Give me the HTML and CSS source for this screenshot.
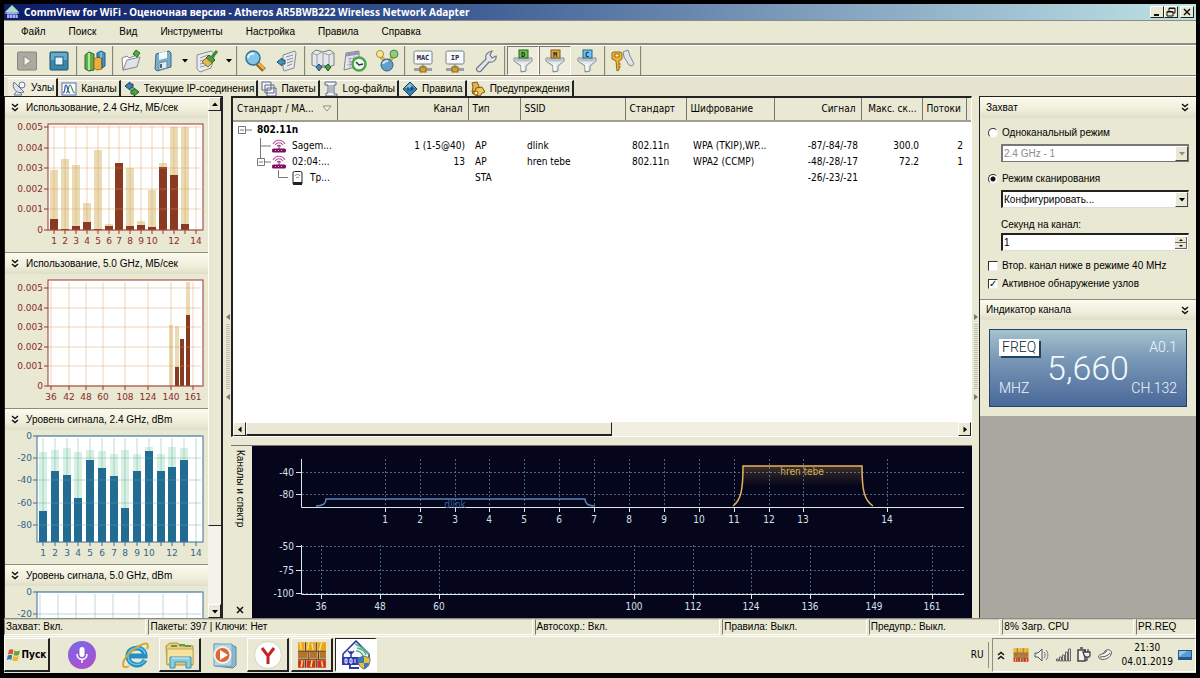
FILE: index.html
```html
<!DOCTYPE html>
<html lang="ru">
<head>
    <meta charset="UTF-8">
    <meta name="viewport" content="width=device-width, initial-scale=1.0">
    <title>CommView for WiFi</title>
    <link rel="stylesheet" href="styles.css">
</head>
<body>
    <svg class="defs" aria-hidden="true">
        <symbol id="chevrons" viewBox="0 0 8 9"><path d="M1 1l3 2.500 3-2.500M1 5l3 2.500 3-2.500" fill="none" stroke="#111" stroke-width="1.500"/></symbol>
        <symbol id="down" viewBox="0 0 8 5"><path d="M1 1h6L4 4.500z" fill="currentColor"/></symbol>
        <symbol id="router" viewBox="0 0 14 14">
            <path d="M1 5C4 0 10 0 13 5M3 6c2-3 6-3 8 0M5 7.500c1-1.500 3-1.500 4 0" fill="none" stroke="#b0559a" stroke-width="1.100"/>
            <path d="M7 6v4" stroke="#8a1c6c"/>
            <rect y="9.500" width="14" height="4" rx="1.500" fill="#7b1260"/>
            <path d="M3 11.500h1M6 11.500h1M9 11.500h1" stroke="#e7b3d8"/>
        </symbol>
        <symbol id="wall" viewBox="0 0 28 26">
            <path d="M1 1h26v24H1z" fill="#e9d9a0"/>
            <path d="M1 1h6v8H1zM9 1h8v8H9zM19 1h8v8h-8z" fill="#e8a322"/>
            <path d="M1 10h9v6H1zM12 10h7v6h-7zM21 10h6v6h-6z" fill="#b3752a"/>
            <path d="M1 18h6v7H1zM9 18h8v7H9zM19 18h8v7h-8z" fill="#c9342a"/>
            <path d="M3 1l1 7M11 1l-1 7M14 2l1 6M23 1l-2 8M5 18l-1 6M14 18l-1 6M23 19l1 5" stroke="#fbe05a" stroke-width="1.500"/>
            <path d="M1 9.500h26M1 17h26M8 1v8M18 1v8M11 10v7M20 10v7M8 17v8M18 17v8" stroke="#5d3524"/>
        </symbol>
        <symbol id="funnel" viewBox="0 0 24 24">
            <path d="M3 9h18v3l-6 5v5l-5 1v-6l-7-5z" fill="#e6ebef" stroke="#7b858d"/>
            <path d="M3 9.500h18l-3 3H6z" fill="#b4bfc8"/>
            <path d="M11.500 15v6" stroke="#fff" stroke-width="2"/>
        </symbol>
        <symbol id="netbox" viewBox="0 0 24 24">
            <rect x="3" y="2" width="18" height="13" rx="1.500" fill="#f8fafc" stroke="#77808c"/>
            <path d="M12 15v4M3 20.500h18" stroke="#98a0a8" stroke-width="3"/>
            <rect x="9" y="18" width="6" height="5" fill="#d7a02a" stroke="#8f6612"/>
        </symbol>
    </svg>

    <header class="title-bar">
        <svg class="app-icon" viewBox="0 0 14 14"><path d="M7 0l7 7H0z" fill="#a9dfc0"/><path d="M2 7h10v6H2z" fill="#5b6bd0"/><path d="M0 8h14M3 10v3M6 10v3M9 10v3M12 10v3" stroke="#e3e6ff" stroke-width="1.200"/></svg>
        <h1>CommView for WiFi - Оценочная версия - Atheros AR5BWB222 Wireless Network Adapter</h1>
        <div class="window-buttons">
            <button aria-label="Свернуть"><svg viewBox="0 0 10 10"><path d="M2 8h5" stroke="#111" stroke-width="2"/></svg></button>
            <button aria-label="Восстановить"><svg viewBox="0 0 10 10"><path d="M3 4V1h6v5H7M1 4.500h6V9H1zM3 1.500h6M1 5h6" fill="none" stroke="#111"/></svg></button>
            <button aria-label="Закрыть" class="close"><svg viewBox="0 0 10 10"><path d="M2 2l6 6M8 2L2 8" stroke="#111" stroke-width="1.500"/></svg></button>
        </div>
    </header>

    <nav class="menu-bar">
        <a href="#">Файл</a>
        <a href="#">Поиск</a>
        <a href="#">Вид</a>
        <a href="#">Инструменты</a>
        <a href="#">Настройка</a>
        <a href="#">Правила</a>
        <a href="#">Справка</a>
    </nav>

    <div class="toolbar">
        <div class="group">
            <button aria-label="Старт"><svg viewBox="0 0 24 24"><rect x="2.500" y="3" width="19" height="18" rx="1" fill="#aaaaa0" stroke="#85857c"/><path d="M9 7l7 5-7 5z" fill="#f2f2e8" stroke="#8b8b82"/></svg></button>
            <button aria-label="Стоп"><svg viewBox="0 0 24 24"><rect x="3" y="3" width="18" height="18" rx="1" fill="#3a86ad" stroke="#1c506e"/><path d="M4 4h16v7H4z" fill="#66abc9"/><rect x="8" y="8" width="8" height="8" fill="#e5f5fb" stroke="#205a78"/></svg></button>
        </div>
        <div class="group">
            <button aria-label="Книги"><svg viewBox="0 0 24 24"><path d="M2 6l4-3 5 2v16l-5 1-4-2z" fill="#5fae4b" stroke="#2d6b2a"/><path d="M6 4v17" stroke="#b6e4a0" stroke-width="2"/><path d="M11 10l4-2 4 1v11l-5 1-3-2z" fill="#efae3c" stroke="#a86b16"/><path d="M14 4l4-2 4 2v13l-3 2V9l-5-1z" fill="#4b93bd" stroke="#25587c"/><path d="M18 3v6" stroke="#b4dcf0"/></svg></button>
        </div>
        <div class="group">
            <button aria-label="Открыть"><svg viewBox="0 0 24 24"><path d="M4 21L3 9l5-2 2 2 8-3v11z" fill="#fff" stroke="#81868e"/><path d="M4 21l4-10 13-3-3 10z" fill="#dfe2e8" stroke="#858b94"/><path d="M17 1l4 3-3 4-4-3z" fill="#54a845" stroke="#256b26"/></svg></button>
            <button aria-label="Сохранить"><svg viewBox="0 0 24 24"><path d="M5 5l13-3 2 2v14L6 22l-2-2z" fill="#79aecd" stroke="#3a6986"/><path d="M8 4l8-2v7l-8 2z" fill="#f4f8fb"/><path d="M8 14l8-2v7l-8 2z" fill="#e4e8ec" stroke="#6a8798"/><path d="M10 15v4" stroke="#3a6986" stroke-width="2"/></svg></button>
            <button class="drop" aria-label="Варианты сохранения"><svg viewBox="0 0 8 5"><use href="#down"/></svg></button>
            <button aria-label="Очистить"><svg viewBox="0 0 24 24"><path d="M2 6l14-4 4 3-4 14-11 4-3-3z" fill="#e9ebee" stroke="#888e95"/><path d="M5 9l8-3M5 12l7-2M5 15l5-1M5 18l8-2" stroke="#8d949c"/><path d="M22 2l-5 6" stroke="#3c8a33" stroke-width="3"/><path d="M14 6l6 5-3 3-6-5z" fill="#4f9e41" stroke="#285f24"/><path d="M11 9l6 5-4 4-6-5z" fill="#e0ba52" stroke="#94701c"/></svg></button>
            <button class="drop" aria-label="Варианты очистки"><svg viewBox="0 0 8 5"><use href="#down"/></svg></button>
        </div>
        <div class="group">
            <button aria-label="Найти"><svg viewBox="0 0 24 24"><path d="M14 14l7 7" stroke="#9a6015" stroke-width="5"/><path d="M14 13l7 7" stroke="#f0b246" stroke-width="2.500"/><circle cx="10" cy="9" r="7" fill="#84c4e8" stroke="#347297" stroke-width="1.500"/><path d="M5 9c0-3 3-5 6-4" stroke="#e6f7ff" stroke-width="2" fill="none"/></svg></button>
            <button aria-label="Перейти"><svg viewBox="0 0 24 24"><path d="M8 6l12-4 1 2-2 15-10 3-1-3z" fill="#e6e8eb" stroke="#858b93"/><path d="M11 8l7-2M12 11l6-2M12 14l6-2M12 17l5-2" stroke="#8b929a"/><path d="M2 13l5-4v2h3v4H7v2z" fill="#4b91b8" stroke="#225473"/></svg></button>
        </div>
        <div class="group">
            <button aria-label="Узлы сети"><svg viewBox="0 0 24 24"><path d="M1 4l4-3 7 2 7-2 4 3v12l-5 2-6-2-6 2-5-2z" fill="#e5e7e9" stroke="#777f87"/><path d="M1 4l5 2v12M6 6l5-3M12 4l6 2v12M18 6l5-2M12 4v12" fill="none" stroke="#999fa5"/><path d="M8 15l3 3-3 4-3-4z" fill="#4288b0" stroke="#225473"/><path d="M10 18h5" stroke="#555"/><path d="M17 15l3 3-3 4-3-4z" fill="#449e46" stroke="#1f5c20"/></svg></button>
            <button aria-label="Планировщик"><svg viewBox="0 0 24 24"><path d="M3 4l13-2v15L1 21z" fill="#e7e8ee" stroke="#83819a"/><path d="M3 6l13-2" stroke="#9694b4" stroke-width="3"/><path d="M5 10l7-1M5 13l7-1M4 16l7-1M7 8v11M11 7v10" stroke="#aaa9bc"/><circle cx="16" cy="15" r="6.500" fill="#f2faf0" stroke="#48a552" stroke-width="2.500"/><path d="M13 13l3 3 4-1" fill="none" stroke="#333" stroke-width="1.500"/></svg></button>
            <button aria-label="Связи"><svg viewBox="0 0 24 24"><path d="M4 5l8 10 8-10" fill="none" stroke="#d1b63b" stroke-width="4"/><circle cx="5" cy="5" r="3.500" fill="#f5e8a1" stroke="#a7912c"/><circle cx="19" cy="5" r="4" fill="#91cb84" stroke="#468a3f"/><circle cx="12" cy="16" r="6" fill="#609fca" stroke="#315f85"/><path d="M8 15c1-3 4-3 5-3" stroke="#c9e7fa" stroke-width="2" fill="none"/></svg></button>
        </div>
        <div class="group">
            <button aria-label="MAC"><svg viewBox="0 0 24 24"><use href="#netbox"/><text x="12" y="11" class="mono-label">MAC</text></svg></button>
            <button aria-label="IP"><svg viewBox="0 0 24 24"><use href="#netbox"/><text x="12" y="11" class="mono-label">IP</text></svg></button>
            <button aria-label="Настройки"><svg viewBox="0 0 24 24"><path d="M2 19l9-9c-1-4 1-7 6-8l-2 4 2 3 4-2c1 4-3 7-7 6l-8 9c-2 2-6-1-4-3z" fill="#e1e5eb" stroke="#717985" stroke-width="1.200"/></svg></button>
        </div>
        <div class="group">
            <button class="pressed" aria-label="Пакеты данных"><svg viewBox="0 0 24 24"><use href="#funnel"/><rect x="8" y="1" width="9" height="8" fill="#6ac044" stroke="#286523"/><text x="12" y="8" class="mono-label">D</text></svg></button>
            <button class="pressed" aria-label="Пакеты управления"><svg viewBox="0 0 24 24"><use href="#funnel"/><rect x="8" y="1" width="9" height="8" fill="#dbab3e" stroke="#7d5914"/><text x="12" y="8" class="mono-label">M</text></svg></button>
            <button aria-label="Контрольные пакеты"><svg viewBox="0 0 24 24"><use href="#funnel"/><rect x="8" y="1" width="9" height="8" fill="#6ec4e8" stroke="#286484"/><text x="12" y="8" class="mono-label">C</text></svg></button>
        </div>
        <div class="group">
            <button aria-label="Ключи"><svg viewBox="0 0 24 24"><path d="M12 3l5-2 2 6 4 8-2 2-3-1-5-8z" fill="#dfe4e8" stroke="#818990"/><path d="M2 3h8l1 2v5l-3 2v9l-2 1-1-10-4-2V4z" fill="#ecb536" stroke="#9b6c14"/><rect x="4" y="5" width="4" height="3" fill="#fff6d5" stroke="#9b6c14"/><path d="M8 15h2M8 18h2" stroke="#9b6c14"/></svg></button>
        </div>
    </div>

    <nav class="tabs">
        <a href="#" class="active"><svg viewBox="0 0 16 16"><path d="M3 2c-3 6 3 13 10 10z" fill="#dde4ee" stroke="#66758f"/><path d="M5 4l7 7M5 12l-2 3h8l-2-3" fill="none" stroke="#66758f"/><circle cx="11" cy="5" r="3" fill="#f4f6fa" stroke="#66758f"/></svg>Узлы</a>
        <a href="#"><svg viewBox="0 0 16 16"><rect x="1" y="2" width="14" height="12" fill="#fff" stroke="#596dae"/><path d="M5 12c3-1 2-8 4-8s2 8 5 8" fill="none" stroke="#3e9550" stroke-width="1.200"/><path d="M2 12c3-1 1-8 3-8s1 8 4 8" fill="none" stroke="#394ca8" stroke-width="1.200"/></svg>Каналы</a>
        <a href="#"><svg viewBox="0 0 16 16"><path d="M1 5l5-4v2h3v4H6v2z" fill="#3b87ae" stroke="#16405c"/><path d="M15 11l-5-4v2H7v4h3v2z" fill="#4ca345" stroke="#1f5c20"/></svg>Текущие IP-соединения</a>
        <a href="#"><svg viewBox="0 0 16 16"><path d="M1 1h9v8H1zM4 4h9v8H4zM6 7h9v8H6z" fill="#f3f4f9" stroke="#5d6684"/></svg>Пакеты</a>
        <a href="#"><svg viewBox="0 0 16 16"><path d="M2 1h11v3h-2v9h3v2H3v-3h2V4H2z" fill="#f2f3f6" stroke="#5f6780"/><path d="M6 5h4M6 7h4M6 9h4M6 11h4" stroke="#747d95"/></svg>Log-файлы</a>
        <a href="#"><svg viewBox="0 0 16 16"><path d="M8 1l7 7-7 7-7-7z" fill="#347fb4" stroke="#16476f"/><path d="M8 2l5 5H3z" fill="#7fc0e0"/><path d="M6 6v4M9 10V6h2v2H9" stroke="#123955" fill="none"/></svg>Правила</a>
        <a href="#"><svg viewBox="0 0 16 16"><path d="M2 2l5-1 2 4-1 4-6 2 1-5z" fill="#e4b54b" stroke="#80590f"/><path d="M6 7l6-1 3 5-3 1-2 3-5-1-3-2 3-2z" fill="#edc35c" stroke="#80590f"/><circle cx="6" cy="12" r="2" fill="#fff0b5" stroke="#80590f"/></svg>Предупреждения</a>
    </nav>

    <main class="workspace">
        <aside class="charts-panel">
            <div class="charts">
                <section><h2><svg viewBox="0 0 8 9"><use href="#chevrons"/></svg>Использование, 2.4 GHz, МБ/сек</h2><svg class="chart rate" id="usage-24" viewBox="0 0 203 134"></svg></section>
                <section><h2><svg viewBox="0 0 8 9"><use href="#chevrons"/></svg>Использование, 5.0 GHz, МБ/сек</h2><svg class="chart rate" id="usage-50" viewBox="0 0 203 134"></svg></section>
                <section><h2><svg viewBox="0 0 8 9"><use href="#chevrons"/></svg>Уровень сигнала, 2.4 GHz, dBm</h2><svg class="chart level" id="level-24" viewBox="0 0 203 134"></svg></section>
                <section><h2><svg viewBox="0 0 8 9"><use href="#chevrons"/></svg>Уровень сигнала, 5.0 GHz, dBm</h2><svg class="chart level" id="level-50" viewBox="0 0 203 32"></svg></section>
            </div>
            <div class="vscroll">
                <button aria-label="Вверх" class="up"><svg viewBox="0 0 8 5"><use href="#down"/></svg></button>
                <div class="thumb"></div>
                <div class="track"></div>
                <button aria-label="Вниз"><svg viewBox="0 0 8 5"><use href="#down"/></svg></button>
            </div>
        </aside>

        <div class="splitter"><svg viewBox="0 0 6 86"><path d="M5 0v6L1 3zM5 80v6l-4-3z" fill="#777"/><path d="M2 10v66M4 10v66" stroke="#9b9a8b" stroke-dasharray="1 1"/></svg></div>

        <div class="center">
            <div class="nodes">
                <table>
                    <colgroup>
                        <col class="c-node"><col class="c-chan"><col class="c-type"><col class="c-ssid"><col class="c-std"><col class="c-enc"><col class="c-signal"><col class="c-rate"><col class="c-streams"><col>
                    </colgroup>
                    <thead>
                        <tr><th>Стандарт / MA...<svg class="sort" viewBox="0 0 8 7"><path d="M0 1h8L4 6z" fill="#f6f5ea" stroke="#8c8b7e"/></svg></th><th class="num">Канал</th><th>Тип</th><th>SSID</th><th>Стандарт</th><th>Шифрование</th><th class="num">Сигнал</th><th class="num">Макс. ск...</th><th>Потоки</th><th></th></tr>
                    </thead>
                    <tbody>
                        <tr>
                            <td><div class="node"><svg class="tree-root" viewBox="0 0 20 16"><path d="M5.500 4.500h7v7h-7zM7 8h4M13 8h6" fill="none" stroke="#777"/></svg><b>802.11n</b></div></td>
                            <td></td><td></td><td></td><td></td><td></td><td></td><td></td><td></td><td></td>
                        </tr>
                        <tr>
                            <td><div class="node"><svg class="tree" viewBox="0 0 38 16"><path d="M27.500 0v16M28 8h10" stroke="#777"/></svg><svg class="dev" viewBox="0 0 14 14"><use href="#router"/></svg>Sagem...</div></td>
                            <td class="num">1 (1-5@40)</td><td>AP</td><td>dlink</td><td>802.11n</td><td>WPA (TKIP),WP...</td><td class="num">-87/-84/-78</td><td class="num">300.0</td><td class="num">2</td><td></td>
                        </tr>
                        <tr>
                            <td><div class="node"><svg class="tree" viewBox="0 0 38 16"><path d="M27.500 0v4M24.500 4.500h7v7h-7zM26 8h4M32 8h6" fill="none" stroke="#777"/></svg><svg class="dev" viewBox="0 0 14 14"><use href="#router"/></svg>02:04:...</div></td>
                            <td class="num">13</td><td>AP</td><td>hren tebe</td><td>802.11n</td><td>WPA2 (CCMP)</td><td class="num">-48/-28/-17</td><td class="num">72.2</td><td class="num">1</td><td></td>
                        </tr>
                        <tr>
                            <td><div class="node"><svg class="tree-leaf" viewBox="0 0 56 16"><path d="M45.500 0v7.500H55" fill="none" stroke="#777"/></svg><svg class="dev" viewBox="0 0 14 14"><rect x="3" y=".5" width="9" height="13" rx="1.500" fill="#fff" stroke="#222"/><path d="M3 11h9v3H3z" fill="#222"/><path d="M5 5c1-2 4-2 5 0M6 7c1-1 2-1 3 0" fill="none" stroke="#777"/></svg>Тр...</div></td>
                            <td></td><td>STA</td><td></td><td></td><td></td><td class="num">-26/-23/-21</td><td></td><td></td><td></td>
                        </tr>
                    </tbody>
                </table>
                <div class="hscroll">
                    <button aria-label="Влево" class="left"><svg viewBox="0 0 8 5"><use href="#down"/></svg></button>
                    <div class="thumb"></div>
                    <div class="track"></div>
                    <button aria-label="Вправо" class="right"><svg viewBox="0 0 8 5"><use href="#down"/></svg></button>
                </div>
            </div>
            <div class="spectrum">
                <div class="spectrum-side">
                    <span>Каналы и спектр</span>
                    <button aria-label="Закрыть панель"><svg viewBox="0 0 8 8"><path d="M1 1l6 6M7 1L1 7" stroke="#111" stroke-width="1.500"/></svg></button>
                </div>
                <svg id="spectrum" viewBox="0 0 720 172" preserveAspectRatio="xMinYMin"></svg>
            </div>
        </div>

        <div class="splitter"><svg viewBox="0 0 6 86"><path d="M1 0v6l4-3zM1 80v6l4-3z" fill="#777"/><path d="M2 10v66M4 10v66" stroke="#9b9a8b" stroke-dasharray="1 1"/></svg></div>

        <aside class="capture-panel">
            <h2>Захват<svg viewBox="0 0 8 9"><use href="#chevrons"/></svg></h2>
            <form class="capture">
                <label class="option"><input type="radio" name="mode">Одноканальный режим</label>
                <div class="field disabled">
                    <select aria-label="Канал" disabled><option>2.4 GHz - 1</option></select>
                    <span class="arrow"><svg viewBox="0 0 8 5"><use href="#down"/></svg></span>
                </div>
                <label class="option scan"><input type="radio" name="mode" checked>Режим сканирования</label>
                <div class="field">
                    <select aria-label="Сканирование"><option>Конфигурировать...</option></select>
                    <span class="arrow"><svg viewBox="0 0 8 5"><use href="#down"/></svg></span>
                </div>
                <label class="caption" for="seconds">Секунд на канал:</label>
                <div class="field">
                    <input type="text" id="seconds" value="1">
                    <span class="spin"><svg viewBox="0 0 12 12"><path d="M0 5.500h12M0 11.500h12M11.500 0v12" stroke="#666"/><path d="M4 4h4L6 2zM4 8h4l-2 2z" fill="#111"/></svg></span>
                </div>
                <label class="option second"><input type="checkbox">Втор. канал ниже в режиме 40 MHz</label>
                <label class="option"><input type="checkbox" checked>Активное обнаружение узлов</label>
            </form>
            <h2 class="next">Индикатор канала<svg viewBox="0 0 8 9"><use href="#chevrons"/></svg></h2>
            <div class="indicator">
                <div class="lcd">
                    <span class="freq">FREQ</span>
                    <span class="ver">A0.1</span>
                    <span class="value">5,660</span>
                    <span class="unit">MHZ</span>
                    <span class="ch">CH.132</span>
                </div>
            </div>
            <div class="empty"></div>
        </aside>
    </main>

    <div class="status-bar">
        <span class="s1">Захват: Вкл.</span>
        <span class="s2">Пакеты: 397 | Ключи: Нет</span>
        <span class="s3">Автосохр.: Вкл.</span>
        <span class="s4">Правила: Выкл.</span>
        <span class="s5">Предупр.: Выкл.</span>
        <span class="s5">8% Загр. CPU</span>
        <span class="s6">PR.REQ</span>
    </div>

    <footer class="taskbar">
        <button class="start"><svg viewBox="0 0 14 14"><path d="M2 2c2-1 3-1 4.500 0L5.500 6.500C4 5.500 3 5.500 1 6.500z" fill="#d9542b"/><path d="M7.500 2.500c2 1 3 1 5.500 0l-1 4.500c-2 1-3.500 1-5.500 0z" fill="#68a63a"/><path d="M.8 7.500c2-1 3-1 4.500 0l-1 4.500c-1.500-1-2.500-1-4.500 0z" fill="#3a73b9"/><path d="M6.300 8c2 1 3.500 1 5.500 0l-1 4.500c-2 1-3.500 1-5.500 0z" fill="#e6bd32"/></svg>Пуск</button>
        <button class="task plain" aria-label="Алиса"><svg viewBox="0 0 30 30"><defs><linearGradient id="alice" x2=".3" y2="1"><stop stop-color="#7a67ea"/><stop offset="1" stop-color="#a653cf"/></linearGradient></defs><circle cx="15" cy="15" r="14" fill="url(#alice)"/><rect x="12.500" y="7" width="5" height="10" rx="2.500" fill="#fff"/><path d="M10 14c0 7 10 7 10 0M15 19v4" fill="none" stroke="#fff" stroke-width="1.500"/></svg></button>
        <button class="task plain ie" aria-label="Internet Explorer"><svg viewBox="0 0 30 30"><path d="M24 20c-4 8-17 6-17-4S24 5 24 16H9" fill="none" stroke="#258ec3" stroke-width="5"/><path d="M24 20c-4 7-17 6-17-4S23 5 24 14" fill="none" stroke="#69c4e6" stroke-width="1.500"/><path d="M8 26C-1 31 0 19 12 10S29 2 26 9" fill="none" stroke="#d8a932" stroke-width="2"/></svg></button>
        <button class="task" aria-label="Проводник"><svg viewBox="0 0 30 30"><path d="M1 6l4-3h8l2 3h13v19H2z" fill="#e9cf77" stroke="#b2933e"/><path d="M6 6h6M14 5h6M20 6h6" stroke="#60984f" stroke-width="2"/><path d="M2 9h26v15H2z" fill="#f5e4a0" stroke="#c6aa59"/><path d="M5 28V17h21v11h-5v-6H10v6z" fill="#8acbdc" stroke="#3a91ad"/><path d="M7 18h17" stroke="#dcf5fa"/></svg></button>
        <button class="task plain" aria-label="Проигрыватель"><svg viewBox="0 0 30 30"><path d="M5 4l18 1 4 2v18l-3 3-18-2z" fill="#8fb9cc" stroke="#56859e"/><path d="M5 4h18v22H5z" fill="#b4d5e2" stroke="#76a3b8"/><circle cx="13.500" cy="15" r="8" fill="#df672b" stroke="#eef3f5" stroke-width="2"/><path d="M11 10l8 5-8 5z" fill="#fff"/></svg></button>
        <button class="task" aria-label="Yandex"><svg viewBox="0 0 30 30"><circle cx="15" cy="15" r="13.500" fill="#fff" stroke="#d5d2c0"/><path d="M9 8l6 8 6-8M15 15v9" fill="none" stroke="#c52526" stroke-width="3"/></svg></button>
        <button class="task" aria-label="Firewall"><svg viewBox="0 0 28 26"><use href="#wall"/></svg></button>
        <button class="task current" aria-label="CommView"><svg viewBox="0 0 30 30"><path d="M15 1l13 13v4H2v-4z" fill="#f6f9ff" stroke="#2530a0" stroke-width="1.500"/><path d="M16 8c5 1 8 3 9 7M15 11c4 0 6 2 7 5M14 4c7 3 12 7 14 11" fill="none" stroke="#58b181" stroke-width="1.500"/><path d="M7 11l3 3 3-3M10 11v6" fill="none" stroke="#27329e" stroke-width="1.500"/><rect x="1" y="17" width="19" height="8" fill="#2e39b0"/><path d="M4 19h2v4H4zM9 19h2v4H9zM14 19v4" fill="none" stroke="#fff"/><path d="M9 25v3h9" stroke="#2e39b0" fill="none" stroke-width="2"/><path d="M17 18l6-2 6 2c0 6-1 9-6 11-5-2-6-5-6-11z" fill="#e6bf38" stroke="#777"/><path d="M23 16v7h-6v-5zM23 23h5c-1 3-2 5-5 6z" fill="#3c7ab9"/></svg></button>
        <div class="lang">RU</div>
        <div class="tray">
            <svg class="up-icon" viewBox="0 0 8 9"><path d="M1 4l3-2.500L7 4M1 8l3-2.500L7 8" fill="none" stroke="#111" stroke-width="1.500"/></svg>
            <svg viewBox="0 0 28 26"><use href="#wall"/></svg>
            <svg viewBox="0 0 16 16"><path d="M1 6h3l4-4v12l-4-4H1z" fill="#eceef0" stroke="#555"/><path d="M10 5c1.500 2 1.500 4 0 6M12 3c2.500 3 2.500 7 0 10" fill="none" stroke="#777"/></svg>
            <svg viewBox="0 0 16 16"><path d="M1.500 12h2v2h-2zM4.500 10h2v4h-2zM7.500 8h2v6h-2zM10.500 5h2v9h-2zM13.500 2h2v12h-2z" fill="#ddd" stroke="#666"/></svg>
            <svg viewBox="0 0 16 16"><path d="M2 3h7v11H2z" fill="#f3f3ee" stroke="#444" stroke-width="1.500"/><path d="M4 1h3M7 5h7v3c0 3-5 3-6 0zM9 2v3M12 2v3M11 10v3H9" fill="#eee" stroke="#444" stroke-width="1.300"/></svg>
            <svg viewBox="0 0 16 16"><path d="M2 11c-2-4 5-3 6-7 3-3 8 0 6 3 0 3-8 8-12 4z" fill="#f6f6f2" stroke="#555"/><path d="M3 10c4 0 8-1 10-4M6 7l4-3" fill="none" stroke="#555"/></svg>
            <div class="clock"><span>21:30</span><span>04.01.2019</span></div>
            <svg class="desk" viewBox="0 0 14 12"><path d="M0 1h14v10H0z" fill="#24568f"/><path d="M1 2h12v6H1z" fill="#5b9cd0"/><path d="M1 8l8-6H1z" fill="#92c4e8"/></svg>
        </div>
    </footer>

    <script src="script.js"></script>
</body>
</html>
```
FILE: styles.css
```css
* {
    box-sizing: border-box;
}

body {
    display: flex;
    flex-direction: column;
    height: 100vh;
    margin: 0;
    padding: 4px 4px 5px;
    background-color: #000;
    color: #000;
    font-family: "Liberation Sans", Arial, sans-serif;
    font-size: 10px;
    line-height: 14px;
    overflow: hidden;
}

.defs {
    position: absolute;
    width: 0;
    height: 0;
}

button,
input,
select {
    margin: 0;
    padding: 0;
    border: none;
    border-radius: 0;
    background: none;
    color: inherit;
    font: inherit;
}

button {
    display: flex;
    align-items: center;
    justify-content: center;
}

a {
    color: inherit;
    text-decoration: none;
}

h1,
h2 {
    margin: 0;
    font-size: 10px;
}

/* Title bar */
.title-bar {
    display: flex;
    align-items: center;
    height: 16px;
    flex: none;
    padding: 0 2px 0 1px;
    background: linear-gradient(to right, #0c1c66, #31508d 33%, #7f9dbb 67%, #bfe2e6);
    color: #fff;
    font-family: "Noto Sans", sans-serif;
}

.app-icon {
    width: 14px;
    height: 14px;
    margin-right: 5px;
}

.title-bar h1 {
    flex: 1;
}

.window-buttons {
    display: flex;
}

.window-buttons button {
    width: 14px;
    height: 12px;
    background-color: #e9e8d2;
    border: 1px solid;
    border-color: #fff #222 #222 #fff;
}

.window-buttons .close {
    margin-left: 2px;
}

.window-buttons svg {
    width: 10px;
    height: 10px;
}

/* Menu */
.menu-bar {
    display: flex;
    align-items: center;
    gap: 23px;
    height: 25px;
    flex: none;
    padding-left: 17px;
    background-color: #e9e8d2;
    border-top: 1px solid #8d8c82;
    border-bottom: 2px solid #8d8c82;
}

/* Toolbar */
.toolbar {
    display: flex;
    height: 31px;
    flex: none;
    padding-left: 6px;
    background-color: #e9e8d2;
    border-top: 1px solid #fff;
    border-bottom: 1px solid #77766e;
}

.group {
    display: flex;
    padding: 0 1px;
    border-right: 2px groove #dcdac2;
}

.group button {
    width: 32px;
}

.group svg {
    width: 24px;
    height: 24px;
}

.group .drop {
    width: 12px;
}

.group .drop svg {
    width: 8px;
    height: 5px;
}

.group .pressed {
    border: 1px solid;
    border-color: #77766e #fff #fff #77766e;
    background-color: #efeedd;
}

/* Tabs */
.tabs {
    display: flex;
    height: 20px;
    flex: none;
    padding: 1px 4px 0;
    background-color: #e6e4cf;
    border-top: 1px solid #fff;
}

.tabs a {
    display: flex;
    align-items: center;
    gap: 4px;
    margin-top: 2px;
    padding: 0 2px 0 3px;
    background-color: #e9e8d2;
    border-top: 1px solid #fff;
    border-right: 2px solid #222;
}

.tabs .active {
    margin-top: 0;
    background-color: #efeedd;
}

.tabs svg {
    width: 16px;
    height: 16px;
}

/* Workspace */
.workspace {
    display: flex;
    flex: 1;
    min-height: 0;
    background-color: #e9e8d2;
}

.charts-panel {
    display: flex;
    width: 219px;
    flex: none;
    margin-right: 1px;
    border: 1px solid #222;
    border-width: 1px 2px 0 1px;
    overflow: hidden;
}

.charts {
    flex: 1;
}

.charts section + section {
    border-top: 1px solid #8d8c82;
}

h2 {
    display: flex;
    align-items: center;
    height: 21px;
    background: linear-gradient(#fbfaec, #f0efdc 60%, #dfdec8);
    font-weight: normal;
}

.charts h2 svg {
    width: 8px;
    height: 9px;
    margin: 0 7px 0 6px;
}

.chart {
    display: block;
    width: 100%;
}

svg text {
    font-family: "DejaVu Sans", sans-serif;
    font-size: 9px;
}

svg .mono-label {
    font: bold 7px "DejaVu Sans Mono", monospace;
    text-anchor: middle;
    fill: #222840;
}

.rate text {
    fill: #8b2a2a;
}

.rate .axis {
    stroke: #9b3434;
}

.rate .grid {
    stroke: #d99b5c;
}

.rate .peak {
    fill: #eadbb2;
}

.rate .bar {
    fill: #8b3a22;
}

.level text {
    fill: #2f648c;
}

.level .axis {
    stroke: #3a6f97;
}

.level .grid {
    stroke: #5fa8a4;
}

.level .peak {
    fill: #d6f0e2;
}

.level .bar {
    fill: #226c94;
}

.plot {
    fill: #fff;
}

.axis {
    fill: none;
}

.chart .grid {
    opacity: 0.2;
}

.end {
    text-anchor: end;
}

.mid {
    text-anchor: middle;
}

.vscroll {
    display: flex;
    flex-direction: column;
    width: 13px;
}

.vscroll button,
.hscroll button {
    width: 13px;
    height: 14px;
    background-color: #e9e8d2;
    border: 1px solid;
    border-color: #fff #222 #222 #fff;
}

.vscroll svg,
.hscroll svg {
    width: 8px;
    height: 5px;
    flex: none;
}

.vscroll .up svg {
    transform: rotate(180deg);
}

.vscroll .thumb {
    flex: 415;
    border-bottom: 1px solid #222;
    border-left: 1px solid #fff;
}

.vscroll .track {
    flex: 78;
    background-color: #f4f3ea;
}

.splitter {
    display: flex;
    align-items: center;
    justify-content: center;
    width: 7px;
    flex: none;
}

.splitter svg {
    width: 6px;
    height: 86px;
}

.center {
    display: flex;
    flex-direction: column;
    flex: 1;
    min-width: 0;
    gap: 8px;
}

.nodes {
    display: flex;
    flex-direction: column;
    flex: 1;
    background-color: #fff;
    border: 2px solid #222;
    border-right: 1px solid #fff;
    border-bottom: 1px solid #fff;
}

.nodes table {
    width: 100%;
    table-layout: fixed;
    border-collapse: collapse;
    font-family: "DejaVu Sans Condensed", "DejaVu Sans", sans-serif;
}

.nodes th {
    height: 23px;
    padding: 0 4px;
    background-color: #e9e8d2;
    border-right: 1px solid #77766e;
    border-bottom: 2px solid #a09f92;
    font-weight: normal;
    text-align: left;
    white-space: nowrap;
    overflow: hidden;
}

.nodes th:last-child {
    border-right: none;
}

.nodes td {
    height: 16px;
    padding: 0 3px 0 7px;
    line-height: 16px;
    white-space: nowrap;
}

.nodes td:first-child {
    padding: 0;
}

.nodes .num {
    text-align: right;
}

.nodes th.num {
    padding-right: 5px;
}

.sort {
    width: 8px;
    height: 7px;
    margin-left: 9px;
}

.node {
    display: flex;
    align-items: center;
    height: 16px;
}

.tree-root {
    width: 20px;
    height: 16px;
    margin-right: 4px;
}

.tree {
    width: 38px;
    height: 16px;
}

.tree-leaf {
    width: 56px;
    height: 16px;
}

.dev {
    width: 14px;
    height: 14px;
    margin: 0 6px 0 1px;
}

.c-node { width: 104px; }
.c-chan { width: 131px; }
.c-type { width: 52px; }
.c-ssid { width: 105px; }
.c-std { width: 61px; }
.c-enc { width: 88px; }
.c-signal { width: 87px; }
.c-rate { width: 61px; }
.c-streams { width: 44px; }

.hscroll {
    display: flex;
    height: 14px;
    margin-top: auto;
}

.hscroll .left svg {
    transform: rotate(90deg);
}

.hscroll .right svg {
    transform: rotate(-90deg);
}

.hscroll .thumb {
    flex: 365;
    background-color: #e9e8d2;
    border: 1px solid;
    border-color: #fff #222 #222 #fff;
    border-bottom-width: 2px;
}

.hscroll .track {
    flex: 346;
    background-color: #f0efe2;
}

.spectrum {
    display: flex;
    height: 173px;
    flex: none;
    border-top: 1px solid #77766e;
}

.spectrum-side {
    display: flex;
    flex-direction: column;
    align-items: center;
    justify-content: space-between;
    width: 21px;
    padding: 4px 4px 4px 0;
}

.spectrum-side span {
    writing-mode: vertical-rl;
}

.spectrum-side svg {
    width: 8px;
    height: 8px;
}

#spectrum {
    flex: 1;
    min-width: 0;
    height: 172px;
    background-color: #05051b;
}

#spectrum text {
    font-family: "DejaVu Sans Condensed", "DejaVu Sans", sans-serif;
    font-size: 10px;
    fill: #d5e2e8;
}

#spectrum .axis {
    stroke: #dfe8e6;
}

#spectrum .grid {
    stroke: #53809f;
    stroke-dasharray: 2 2;
    opacity: 0.8;
}

#spectrum .blue {
    fill: #3a5e9c;
}

#spectrum .gold {
    fill: #d8a752;
}

/* Capture panel */
.capture-panel {
    display: flex;
    flex-direction: column;
    width: 217px;
    flex: none;
    border-top: 1px solid #222;
    border-left: 1px solid #222;
}

.capture-panel h2 {
    justify-content: space-between;
    flex: none;
    padding: 0 7px 0 6px;
}

.capture-panel h2 svg {
    width: 8px;
    height: 9px;
}

.capture-panel .next {
    border-top: 1px solid #8d8c82;
}

.capture {
    padding: 8px 7px 4px 8px;
}

.option {
    display: flex;
    align-items: center;
    gap: 4px;
    height: 14px;
    margin-bottom: 4px;
    white-space: nowrap;
}

.scan {
    margin-top: 10px;
}

.second {
    margin-top: 8px;
}

.option input {
    appearance: none;
    width: 10px;
    height: 10px;
    background-color: #fff;
    border: 1px solid;
    border-color: #333 #eee #eee #333;
}

.option input[type="radio"] {
    border-radius: 50%;
}

.option input[type="radio"]:checked {
    background: radial-gradient(#111 2px, #fff 3px);
}

.option input[type="checkbox"]:checked::before {
    content: "✓";
    display: block;
    font: bold 10px/8px "DejaVu Sans", sans-serif;
    text-align: center;
}

.field {
    display: flex;
    height: 18px;
    margin-left: 13px;
    background-color: #fff;
    border: 1px solid;
    border-color: #222 #ddd #ddd #222;
    border-width: 2px 1px 1px 2px;
}

.field select,
.field input {
    appearance: none;
    flex: 1;
    min-width: 0;
    padding-left: 1px;
    outline: none;
    opacity: 1;
}

.field.disabled {
    color: #8d8d89;
    border-color: #777;
}

.field .arrow {
    display: flex;
    align-items: center;
    justify-content: center;
    width: 13px;
    background-color: #e9e8d2;
    border: 1px solid;
    border-color: #fff #444 #444 #fff;
}

.field .arrow svg {
    width: 8px;
    height: 5px;
}

.field .spin {
    display: flex;
    align-items: center;
    padding-right: 1px;
}

.field .spin svg {
    width: 12px;
    height: 12px;
    background-color: #e9e8d2;
}

.caption {
    display: block;
    margin: 10px 0 1px 13px;
}

.indicator {
    padding: 9px;
}

.lcd {
    display: grid;
    grid-template-columns: auto 1fr auto;
    grid-template-rows: 17px 1fr 17px;
    height: 78px;
    padding: 9px;
    background: linear-gradient(#a3c3ce, #7896b5 40%, #4a6899);
    border: 1px solid #23436b;
    color: #f1f8fb;
    font-family: Roboto, "DejaVu Sans", sans-serif;
    font-size: 14px;
    font-weight: 300;
    line-height: 17px;
}

.lcd .freq {
    grid-column: 1;
    grid-row: 1;
    padding: 0 3px;
    background-color: #fff;
    box-shadow: 2px 2px 0 #1f4468;
    color: #123;
}

.lcd .ver {
    grid-column: 3;
    grid-row: 1;
    text-align: right;
}

.lcd .value {
    grid-column: 1 / 4;
    grid-row: 1 / 4;
    align-self: center;
    justify-self: center;
    font-size: 34px;
    line-height: 34px;
}

.lcd .unit {
    grid-column: 1;
    grid-row: 3;
}

.lcd .ch {
    grid-column: 2 / 4;
    grid-row: 3;
    text-align: right;
}

.empty {
    flex: 1;
    background-color: #a8a8a0;
}

/* Status bar */
.status-bar {
    display: flex;
    gap: 2px;
    height: 18px;
    flex: none;
    padding-bottom: 1px;
    background-color: #e9e8d2;
    border-top: 1px solid #8d8c82;
}

.status-bar span {
    padding-left: 1px;
    border: 1px solid;
    border-color: #c9c8b4 #fff #fff #77766e;
    flex-basis: 0;
    white-space: nowrap;
}

.s1 { flex-grow: 142; }
.s2 { flex-grow: 388; }
.s3 { flex-grow: 186; }
.s4 { flex-grow: 144; }
.s5 { flex-grow: 131; }
.s6 { flex-grow: 58; }

/* Taskbar */
.taskbar {
    display: flex;
    align-items: center;
    height: 37px;
    flex: none;
    background-color: #e9e8d2;
    border-top: 1px solid #fff;
    font-family: "DejaVu Sans Condensed", "DejaVu Sans", sans-serif;
}

.taskbar button {
    height: 34px;
    border: 1px solid;
    border-color: #fff #222 #222 #fff;
    border-width: 1px 2px 2px 1px;
}

.taskbar .start {
    width: 46px;
    gap: 1px;
    font-weight: bold;
}

.start svg {
    width: 14px;
    height: 14px;
}

.taskbar .task {
    width: 42px;
    margin-right: 2px;
}

.task svg {
    width: 30px;
    height: 30px;
}

.taskbar .plain {
    border-color: transparent;
}

.start + .task {
    margin-left: 11px;
}

.taskbar .ie {
    margin-left: 10px;
}

.taskbar .current {
    border-color: #222 #fff #fff #222;
    background-color: #fff;
}

.lang {
    margin-left: auto;
    padding: 6px 4px 6px 0;
    border-right: 1px solid #8d8c82;
}

.tray {
    display: flex;
    align-items: center;
    gap: 5px;
    height: 34px;
    margin-left: 3px;
    padding: 0 3px 0 4px;
    border: 1px solid;
    border-color: #8d8c82 #fff #fff #8d8c82;
}

.tray svg {
    width: 16px;
    height: 16px;
}

.tray .up-icon {
    width: 8px;
    height: 9px;
    margin-right: 3px;
}

.clock {
    display: flex;
    flex-direction: column;
    align-items: center;
    margin-left: 4px;
}

.tray .desk {
    width: 14px;
    height: 12px;
}
```
FILE: script.js
```js
const BOTTOM = 112;

function drawChart(id, chart) {
    const left = chart.left;
    let out = `<rect class="plot" x="${left}" y="6" width="${198 - left}" height="106"/>`;

    chart.bars.forEach(([x, peak, bar]) => {
        const w = chart.barWidth;
        out += `<rect class="peak" x="${x - w / 2}" y="${peak}" width="${w}" height="${BOTTOM - peak}"/>`;
        if (bar) {
            out += `<rect class="bar" x="${x - w / 2}" y="${bar}" width="${w}" height="${BOTTOM - bar}"/>`;
        }
    });

    chart.xTicks.forEach(([x, label]) => {
        const hit = chart.bars.find(bar => bar[0] === x);
        const end = hit && hit[2] ? hit[2] : BOTTOM;
        out += `<path class="grid" d="M${x} 8V${end}" stroke-width="2"/>`;
        out += `<path class="axis" d="M${x} 112v4"/>`;
        if (label) {
            out += `<text class="mid" x="${x}" y="126">${label}</text>`;
        }
    });

    chart.yTicks.forEach(([y, label]) => {
        out += `<path class="grid" d="M${left} ${y}H196" stroke-width="2"/>`;
        out += `<path class="axis" d="M${left - 4} ${y}h4"/>`;
        out += `<text class="end" x="${left - 5}" y="${y + 3}">${label}</text>`;
    });

    out += `<rect class="axis" x="${left}" y="6" width="${198 - left}" height="106"/>`;
    document.getElementById(id).innerHTML = out;
}

// Channel labels 11 and 13 are skipped, there is no room for them
function channelTicks(first, step) {
    const ticks = [];
    for (let ch = 1; ch <= 14; ch++) {
        ticks.push([Math.round(first + step * (ch - 1)), ch === 11 || ch === 13 ? "" : ch]);
    }
    return ticks;
}

function channelBars(ticks, peaks, bars) {
    return peaks.map((peak, i) => [ticks[i][0], peak, bars[i]]);
}

const usageTicks = channelTicks(49, 10.9);
drawChart("usage-24", {
    left: 43,
    barWidth: 8,
    xTicks: usageTicks,
    yTicks: [[9, "0.005"], [30, "0.004"], [50, "0.003"], [71, "0.002"], [91, "0.001"], [112, "0"]],
    bars: channelBars(usageTicks,
        [52, 41, 47, 85, 32, 106, 45, 50, 103, 72, 45, 9, 9],
        [101, 111, 108, 104, 111, 108, 45, 108, 107, 109, 49, 57, 106])
});

drawChart("usage-50", {
    left: 43,
    barWidth: 4,
    xTicks: [[46, "36"], [64, "42"], [81, "48"], [98, "60"], [120, "108"], [143, "124"], [166, "140"], [188, "161"]],
    yTicks: [[14, "0.005"], [34, "0.004"], [53, "0.003"], [73, "0.002"], [92, "0.001"], [112, "0"]],
    bars: [[166, 51, 0], [172, 52, 93], [177, 65, 65], [183, 8, 41]]
});

const levelTicks = channelTicks(38, 11.77);
drawChart("level-24", {
    left: 32,
    barWidth: 8,
    xTicks: levelTicks,
    yTicks: [[6, "0"], [28, "-20"], [50, "-40"], [73, "-60"], [95, "-80"]],
    bars: channelBars(levelTicks,
        [22, 20, 18, 22, 20, 21, 24, 20, 24, 17, 24, 17, 18],
        [81, 41, 45, 68, 30, 38, 46, 78, 41, 21, 41, 37, 30])
});

// Only the top of this chart fits above the status bar
drawChart("level-50", {
    left: 32,
    barWidth: 4,
    xTicks: [[35], [53], [71], [90], [108], [134], [158], [182]],
    yTicks: [[6, "0"], [28, "-20"]],
    bars: []
});

function drawBand(top, axis, yTicks, xTicks) {
    let out = "";
    yTicks.forEach(([y, label]) => {
        out += `<path class="grid" d="M50 ${y + 0.5}H712"/><path class="axis" d="M44 ${y + 0.5}h5"/>`;
        out += `<text class="end" x="42" y="${y + 4}">${label}</text>`;
    });
    xTicks.forEach(([x, label]) => {
        out += `<path class="grid" d="M${x + 0.5} ${top}V${axis}"/><path class="axis" d="M${x + 0.5} ${axis}v5"/>`;
        out += `<text class="mid" x="${x}" y="${axis + 16}">${label}</text>`;
    });
    return out + `<path class="axis" d="M49.500 ${top}V${axis + 0.5}H712"/>`;
}

document.getElementById("spectrum").innerHTML =
    `<defs><linearGradient id="glow" x2="0" y2="1">
        <stop stop-color="#e0b050" stop-opacity="0.25"/><stop offset="0.5" stop-color="#e0b050" stop-opacity="0"/>
    </linearGradient></defs>` +
    drawBand(13, 61, [[26, "-40"], [48, "-80"]],
        [[133, 1], [168, 2], [203, 3], [237, 4], [272, 5], [307, 6], [342, 7], [377, 8], [412, 9],
            [447, 10], [482, 11], [517, 12], [551, 13], [635, 14]]) +
    drawBand(99, 148, [[100, "-50"], [124, "-75"], [147, "-100"]],
        [[69, 36], [128, 48], [187, 60], [382, 100], [441, 112], [499, 124], [558, 136], [622, 149], [680, 161]]) +
    `<path d="M64 60c6 0 10-2 10-7h259c0 5 4 7 10 7" fill="none" stroke="#5487c2" stroke-width="1.500"/>
    <text class="mid blue" x="203" y="62">dlink</text>
    <path d="M481 60C489 54 491 44 491 20h119c0 24 2 34 11 40" fill="url(#glow)" stroke="#e3b258" stroke-width="1.500"/>
    <text class="mid gold" x="550" y="29">hren tebe</text>`;
```
